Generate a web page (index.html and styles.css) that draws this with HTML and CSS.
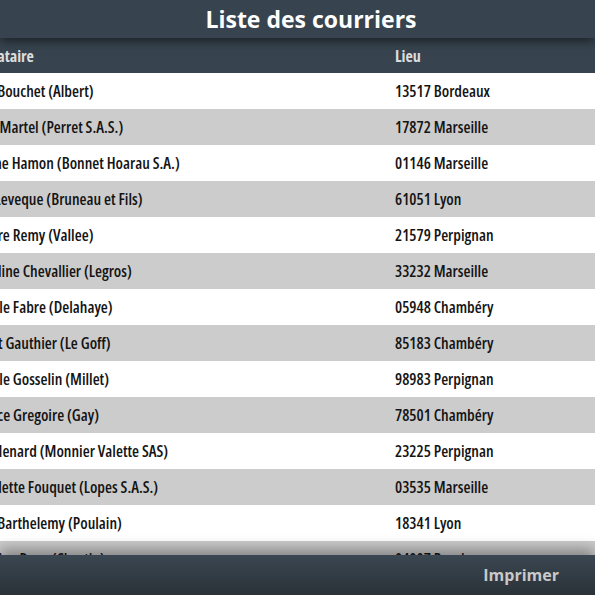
FILE: index.html
```html
<!DOCTYPE html>
<html lang="fr">
<head>
<meta charset="utf-8">
<title>Liste des courriers</title>
<link rel="stylesheet" href="styles.css">
</head>
<body>
<div class="app">
  <header class="titlebar"><h1 class="title">Liste des courriers</h1></header>
  <main class="list">
    <table class="mail">
      <thead>
        <tr><th class="c1">Destinataire</th><th class="c2">Lieu</th></tr>
      </thead>
      <tbody>
        <tr><td class="c1">Henri Bouchet (Albert)</td><td class="c2">13517 Bordeaux</td></tr>
        <tr><td class="c1">Marie Martel (Perret S.A.S.)</td><td class="c2">17872 Marseille</td></tr>
        <tr><td class="c1">Blanche Hamon (Bonnet Hoarau S.A.)</td><td class="c2">01146 Marseille</td></tr>
        <tr><td class="c1">Rémi Leveque (Bruneau et Fils)</td><td class="c2">61051 Lyon</td></tr>
        <tr><td class="c1">Léonore Remy (Vallee)</td><td class="c2">21579 Perpignan</td></tr>
        <tr><td class="c1">Micheline Chevallier (Legros)</td><td class="c2">33232 Marseille</td></tr>
        <tr><td class="c1">Danielle Fabre (Delahaye)</td><td class="c2">05948 Chambéry</td></tr>
        <tr><td class="c1">Gilbert Gauthier (Le Goff)</td><td class="c2">85183 Chambéry</td></tr>
        <tr><td class="c1">Danielle Gosselin (Millet)</td><td class="c2">98983 Perpignan</td></tr>
        <tr><td class="c1">Maurice Gregoire (Gay)</td><td class="c2">78501 Chambéry</td></tr>
        <tr><td class="c1">Paul Menard (Monnier Valette SAS)</td><td class="c2">23225 Perpignan</td></tr>
        <tr><td class="c1">Jo Paulette Fouquet (Lopes S.A.S.)</td><td class="c2">03535 Marseille</td></tr>
        <tr><td class="c1">Denis Barthelemy (Poulain)</td><td class="c2">18341 Lyon</td></tr>
        <tr><td class="c1">Ghislaine Roux (Chastin)</td><td class="c2">04007 Perpignan</td></tr>
      </tbody>
    </table>
  </main>
  <footer class="footer"><span class="print">Imprimer</span></footer>
</div>
</body>
</html>
```

FILE: styles.css
```css
html, body {
  margin: 0;
  padding: 0;
  height: 100%;
  background: #ffffff;
}
.app {
  display: flex;
  flex-direction: column;
  height: 100vh;
  overflow: hidden;
}
.titlebar {
  flex: none;
  height: 38px;
  background: #37444f;
  display: flex;
  align-items: center;
  justify-content: center;
  padding-left: 27px;
  position: relative;
  z-index: 2;
  box-shadow: 0 3px 10px rgba(0, 0, 0, 0.55);
}
.title {
  margin: 0;
  color: #ffffff;
  font-family: "Open Sans", "DejaVu Sans", sans-serif;
  font-weight: 700;
  font-size: 23px;
  line-height: 1;
}
.list {
  flex: 1;
  overflow: hidden;
  position: relative;
  z-index: 1;
}
.mail {
  border-collapse: collapse;
  margin-left: -48px;
  width: 643px;
  font-family: "Open Sans", "DejaVu Sans Condensed", sans-serif;
  font-stretch: 75%;
  font-weight: 600;
  font-size: 16px;
}
.mail th, .mail td {
  text-align: left;
  padding: 0 0 0 10px;
  white-space: nowrap;
}
.mail .c1 { width: 423px; }
.mail th {
  height: 35px;
  background: #37444f;
  color: #dddddd;
  font-weight: 700;
}
.mail th.c1 { text-indent: -4px; }
.mail td {
  height: 36px;
  color: #141414;
}
.mail tbody tr:nth-child(even) td {
  background: #cccccc;
}
.footer {
  flex: none;
  height: 40px;
  background: linear-gradient(#3a4651, #2a3238);
  display: flex;
  align-items: center;
  justify-content: flex-end;
  padding-right: 36px;
  position: relative;
  z-index: 3;
  box-shadow: 0 -6px 14px rgba(0, 0, 0, 0.35);
}
.print {
  color: #c9c9c9;
  font-family: "Open Sans", "DejaVu Sans", sans-serif;
  font-weight: 700;
  font-size: 16px;
}
```
